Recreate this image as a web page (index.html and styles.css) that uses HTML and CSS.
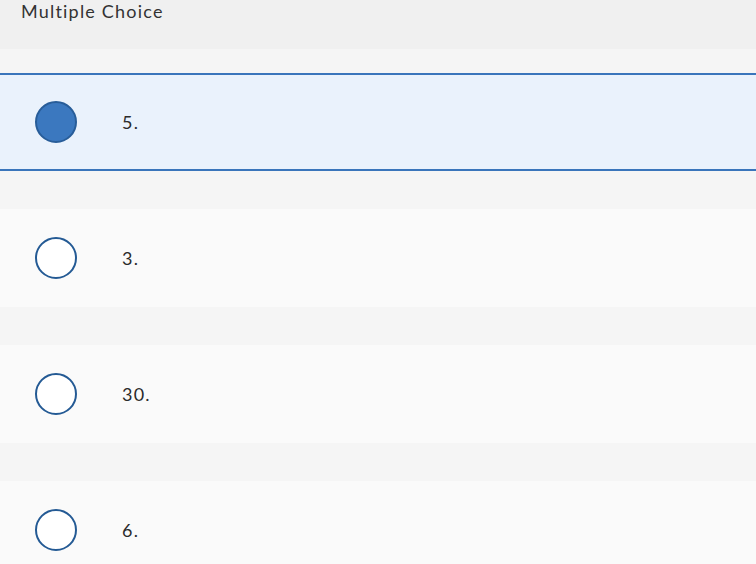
FILE: index.html
```html
<!DOCTYPE html>
<html>
<head>
<meta charset="utf-8">
<link rel="stylesheet" href="styles.css">
</head>
<body>
<div class="page">
  <div class="header">Multiple Choice</div>
  <div class="choices">
    <div class="choice selected"><span class="radio"></span><span class="label">5.</span></div>
    <div class="choice"><span class="radio"></span><span class="label">3.</span></div>
    <div class="choice"><span class="radio"></span><span class="label">30.</span></div>
    <div class="choice"><span class="radio"></span><span class="label">6.</span></div>
  </div>
</div>
</body>
</html>
```
FILE: styles.css
```css
html, body {
  margin: 0;
  padding: 0;
  background: #f5f5f5;
  overflow: hidden;
}
.page {
  width: 756px;
  height: 564px;
  font-family: Lato, "Liberation Sans", sans-serif;
  color: #2b2b2b;
}
.header {
  height: 49px;
  background: #f0f0f0;
  box-sizing: border-box;
  padding: 1px 0 0 21px;
  font-size: 18px;
  line-height: 20px;
  letter-spacing: 1.2px;
  color: #333;
}
.choices {
  display: flex;
  flex-direction: column;
  gap: 38px;
  padding-top: 24px;
}
.choice {
  height: 98px;
  box-sizing: border-box;
  background: #fafafa;
  display: flex;
  align-items: center;
  padding-left: 35px;
  flex-shrink: 0;
}
.choice.selected {
  background: #eaf2fc;
  border-top: 2px solid #3a75bb;
  border-bottom: 2px solid #3a75bb;
}
.radio {
  width: 42px;
  height: 42px;
  box-sizing: border-box;
  border-radius: 50%;
  border: 2px solid #245a94;
  background: #fff;
  flex-shrink: 0;
}
.selected .radio {
  background: #3b78bf;
  border-color: #285d99;
}
.label {
  margin-left: 45px;
  font-size: 18px;
  line-height: 20px;
  letter-spacing: 1.2px;
}
```
